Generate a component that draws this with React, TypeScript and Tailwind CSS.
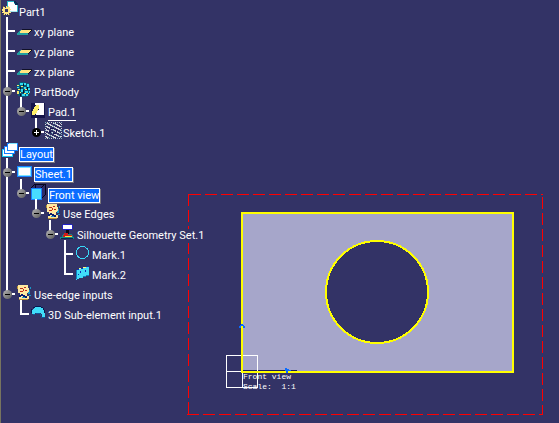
import { useState } from "react";
import type { ReactNode } from "react";

type TreeNode = {
  label: string;
  icon: ReactNode;
  children?: TreeNode[];
  collapsed?: boolean;
  selected?: boolean;
  underlined?: boolean;
  spaced?: boolean;
};

function Icon({ children }: { children: ReactNode }) {
  return (
    <svg
      viewBox="0 0 16 16"
      className="size-4 shrink-0 overflow-visible"
      shapeRendering="crispEdges"
      aria-hidden="true"
    >
      {children}
    </svg>
  );
}

const partIcon = (
  <Icon>
    <path d="M6-2h8v2h3v9H6z" fill="#2ab8c8" />
    <path d="M7-1h6v2h3v7H7z" fill="#fff" />
    <path d="M13-2h2v1h1v1h1v2h-3V0h-1z" fill="#0d2a55" />
    <path d="M9 8h7v1H9z" fill="#a8e4ec" />
    <path
      d="M5 3h1v1h1V3h1v1h1v2h1v1H9v2h1v1H8v2H7v-1H6v1H5v-1H4v1H3v-2H1V9h1V8H1V6h1V4h2v1h1z"
      fill="#ffe680"
    />
    <path d="M4 6h3v3H4z" fill="#333366" />
    <path d="M2 11h1v1H2zM8 11h1v1H8zM2 3h1v1H2z" fill="#8a7830" />
  </Icon>
);

const planeIcon = (
  <Icon>
    <path d="M6 6h10l-5 5H1z" fill="#ffe680" />
    <path d="M6 6h10v1H6zM15 7h1v1h-1zM14 8h1v1h-1zM13 9h1v1h-1zM12 10h1v1h-1z" fill="#111128" />
    <path d="M1 10h11v2H1zM2 9h2v1H2zM3 8h1v1H3zM4 7h1v1H4z" fill="#20a0a0" />
  </Icon>
);

const bodyIcon = (
  <Icon>
    <path d="M3-1h6v1h4v2h1v9h-1v2h-2v1H4v-1H2v-2H1V8h1V6H1V1h2z" fill="#0a5878" />
    <path
      d="M4 0h3v2H4zM8 0h2v2H8zM11 1h2v3h-2zM8 4h2v2H8zM12 5h2v2h-2zM5 6h2v3H5zM9 8h3v2H9zM13 8h1v2h-1zM6 11h3v2H6zM10 11h2v2h-2zM1 4h2v1H1z"
      fill="#30dcf0"
    />
    <path
      d="M1 2h2v1H1zM5 3h2v1H5zM2 6h2v1H2zM1 8h2v3H1zM4 9h1v1H4zM9 6h2v1H9zM8 10h2v1H8zM12 10h1v1h-1z"
      fill="#f4e86a"
    />
    <path d="M7 1h1v2H7zM7 7h1v3H7zM11 4h1v3h-1zM4 11h1v2H4zM4 4h1v2H4z" fill="#06102c" />
  </Icon>
);

const padIcon = (
  <Icon>
    <path d="M1 0h14v15H1z" fill="#15154a" />
    <path d="M5 0h9v12H6V9l3-3V2H5z" fill="#fff" />
    <path d="M6 2h3v4H8v2H7v2H6v1H5v1H2V8h1V6h1V4h1V3h1z" fill="#fff06a" />
  </Icon>
);

const sketchIcon = (
  <Icon>
    {Array.from({ length: 17 }, (_, y) =>
      Array.from({ length: 17 }, (_, x) => {
        const edge = x === 0 || y === 0 || x === 16 || y === 16;
        const on = edge ? (x + y) % 2 === 0 : (x * x * 3 + y * y * 5 + x * y * 2) % 7 < 4;
        return on ? (
          <rect
            key={`${x}-${y}`}
            x={x}
            y={y - 2}
            width="1"
            height="1"
            fill={(x + y * 3) % 4 === 0 ? "#7ca8b8" : "#d8d8dc"}
          />
        ) : null;
      }),
    )}
    <path d="M5 4h4v1H5zM4 7h2v2H4zM8 9h3v1H8zM11 5h1v3h-1z" fill="#181850" />
  </Icon>
);

const layoutIcon = (
  <Icon>
    <path d="M1 5h10v7H1z" fill="#fff" stroke="#18c8f0" />
    <path d="M3 2h10v7H3z" fill="#fff" stroke="#1480ff" />
    <path d="M6-1h10v7H6z" fill="#fff" stroke="#1480ff" />
    <path d="M8-1h8v1H8z" fill="#7ce4ff" />
  </Icon>
);

const sheetIcon = (
  <Icon>
    <path d="M1 2h15v11H1z" fill="#1480ff" />
    <path d="M2 3h13v9H2z" fill="#7ce4ff" />
    <path d="M3 4h11v7H3z" fill="#fff" />
  </Icon>
);

const viewIcon = (
  <Icon>
    <path d="M1 3l4-4h10v11l-4 4" fill="#2c2c6c" stroke="#05051c" />
    <path d="M11 3l4-4M5-1v4" fill="none" stroke="#05051c" />
    <path d="M1 3h11v12H1z" fill="#1480ff" />
    <path d="M2 4h9v10H2z" fill="#48dcff" />
  </Icon>
);

const edgesIcon = (
  <Icon>
    <path d="M2-1h10v3h1v5h-2v3h2v3H3v-3h1V7H2z" fill="#ffe9a0" />
    <path d="M3 13h9v1H3zM1 0h1v3H1z" fill="#b89030" />
    <path d="M4 2h3v1H4zM8 1h2v1H8zM7 3h1v2H7zM4 5h3v1H4zM9 4h2v1H9z" fill="#c02818" />
    <path d="M5 8h2v1h2v1h2v2H9v-1H7v-1H5zM3 9h2v2H3z" fill="#081c70" />
    <path d="M14 1h1v2h-1zM13 4h1v2h-1zM12 6h2v2h-2zM13 9h2v1h-2zM6 11h3v1H6z" fill="#1898c8" />
  </Icon>
);

const geometrySetIcon = (
  <Icon>
    <path d="M4-2h9v1h1v4h-1v1H4V3H3v-4h1z" fill="#2020c8" />
    <path d="M4-1h9v4H4z" fill="#fff" />
    <path d="M7 4h3v4H7z" fill="#080818" />
    <path d="M4 8h9v1h1v2h1v2H1v-2h2V9h1z" fill="#108888" />
    <path d="M5 7h4v2h4v2H4V9h1z" fill="#d01818" />
    <path d="M6 10h7v1H6z" fill="#ffe040" />
    <path d="M2 12h12v1H2z" fill="#082848" />
  </Icon>
);

const circleMarkIcon = (
  <Icon>
    <circle cx="8.5" cy="6.5" r="6" fill="none" stroke="#38d8f8" />
  </Icon>
);

const faceMarkIcon = (
  <Icon>
    <path d="M2 4l4-2h5l4-2v9l-4 2-5 1-4 2z" fill="#40dcf8" />
    <path d="M5 2h3v1H5zM9 1h3v1H9z" fill="#fff080" />
    <path d="M3 3h2v1H3zM7 2h2v1H7zM13 0h2v1h-2zM6 5h1v2H6zM11 4h1v2h-1zM4 8h1v1H4z" fill="#1030b0" />
    <path d="M2 4h1v9H2zM12 9h3v1h-3zM9 10h3v1H9z" fill="#0c80c0" />
  </Icon>
);

const subElementIcon = (
  <Icon>
    <path d="M2 7V4l3-3h6l3 3 1 3v4h-3V9l-2-2H6L4 8H2z" fill="#40dcf8" />
    <path d="M5 0h6v1H5zM3 1h2v1H3zM11 1h2v1h-2zM13 2h1v2h-1zM14 4h1v3h-1zM1 3h1v4H1z" fill="#081850" />
    <path d="M3 8h2v1H3zM6 7h4v1H6zM10 8h1v2h-1zM11 11h4v1h-4z" fill="#0c5898" />
  </Icon>
);

const tree: TreeNode[] = [
  {
    label: "Part1",
    icon: partIcon,
    children: [
      { label: "xy plane", icon: planeIcon },
      { label: "yz plane", icon: planeIcon },
      { label: "zx plane", icon: planeIcon },
      {
        label: "PartBody",
        icon: bodyIcon,
        children: [
          {
            label: "Pad.1",
            icon: padIcon,
            underlined: true,
            spaced: true,
            children: [{ label: "Sketch.1", icon: sketchIcon, collapsed: true }],
          },
        ],
      },
    ],
  },
  {
    label: "Layout",
    icon: layoutIcon,
    selected: true,
    children: [
      {
        label: "Sheet.1",
        icon: sheetIcon,
        selected: true,
        spaced: true,
        children: [
          {
            label: "Front view",
            icon: viewIcon,
            selected: true,
            children: [
              {
                label: "Use Edges",
                icon: edgesIcon,
                spaced: true,
                children: [
                  {
                    label: "Silhouette Geometry Set.1",
                    icon: geometrySetIcon,
                    children: [
                      { label: "Mark.1", icon: circleMarkIcon },
                      { label: "Mark.2", icon: faceMarkIcon },
                    ],
                  },
                ],
              },
            ],
          },
        ],
      },
      {
        label: "Use-edge inputs",
        icon: edgesIcon,
        children: [{ label: "3D Sub-element input.1", icon: subElementIcon }],
      },
    ],
  },
];

function Label({ node }: { node: TreeNode }) {
  if (node.selected) {
    return (
      <span className="mt-1 border border-white bg-[#0a6cff] leading-[13px] shadow-[1px_1px_0_#77747a]">
        {node.label}
      </span>
    );
  }
  if (node.underlined) {
    return <span className="mt-1 border-b border-white leading-[14px]">{node.label}</span>;
  }
  return <span className="mt-1 bg-[#333366] leading-[14px]">{node.label}</span>;
}

function Branch({
  node,
  depth,
  first,
  last,
}: {
  node: TreeNode;
  depth: number;
  first: boolean;
  last: boolean;
}) {
  const [open, setOpen] = useState(!node.collapsed);
  const expandable = depth > 0 && (node.children !== undefined || node.collapsed);
  const indent = depth === 0 ? "" : depth % 2 === 1 ? "pl-[14px]" : "pl-[15px]";

  return (
    <li className="relative">
      {depth > 0 && (
        <span
          className={`absolute left-1.5 w-0.5 bg-white ${first ? "-top-1" : "top-0"} ${
            last ? (first ? "h-[15px]" : "h-[11px]") : "bottom-0"
          }`}
        />
      )}
      <div className={`relative flex h-5 items-center gap-0.5 ${depth === 0 ? "pl-px" : ""}`}>
        {depth > 0 && (
          <span className="-mr-px flex w-[15px] items-center">
            {expandable ? (
              <>
                <button
                  type="button"
                  aria-label={`${open ? "Collapse" : "Expand"} ${node.label}`}
                  aria-expanded={open}
                  onClick={() => setOpen(!open)}
                  className={`relative ml-[3px] flex size-[9px] shrink-0 items-center justify-center rounded-full ${
                    open ? "bg-linear-to-br from-[#b4b4b4] to-[#5c5c5c]" : "bg-black"
                  }`}
                >
                  <span className={`h-px w-[5px] ${open ? "bg-black" : "bg-white"}`} />
                  {!open && <span className="absolute h-[5px] w-px bg-white" />}
                </button>
                <span className="h-0.5 flex-1 bg-white" />
              </>
            ) : (
              <span className="ml-1.5 h-0.5 flex-1 bg-white" />
            )}
          </span>
        )}
        {node.icon}
        <Label node={node} />
      </div>
      {open && node.children && (
        <ul className={`${indent} ${node.spaced ? "pt-px" : ""}`}>
          {node.children.map((child, i) => (
            <Branch
              key={child.label}
              node={child}
              depth={depth + 1}
              first={i === 0}
              last={i === node.children!.length - 1 && node.label !== "Part1"}
            />
          ))}
        </ul>
      )}
    </li>
  );
}

function Drawing() {
  return (
    <svg
      viewBox="0 0 559 423"
      className="h-screen w-full [grid-area:1/1]"
      shapeRendering="crispEdges"
      role="img"
      aria-label="Front view drawing"
    >
      <g stroke="#ff0000" strokeDasharray="12 4" fill="none">
        <path d="M189 194.5H543" />
        <path d="M187 414.5H543" />
        <path d="M188.5 194V415" />
        <path d="M542.5 197V415" />
      </g>
      <rect x="242" y="213" width="271" height="159" fill="#a6a6ca" />
      <path d="M242 370.5h55" stroke="#1c1c5c" />
      <path d="M226.5 355.5h31v32h-31zM226 371.5h16M242.5 372v16" fill="none" stroke="#fff" />
      <rect x="242" y="213" width="271" height="159" fill="none" stroke="#ffff00" strokeWidth="2" />
      <circle cx="377" cy="292" r="51" fill="#333366" stroke="#ffff00" strokeWidth="2" />
      <path
        d="M241 324h2v1h1v1h1v2h-2v-2h-2v2h-2v-2h1v-1h1zM285 368h2v1h2v1h2v1h-3v2h-2v-2h-1z"
        fill="#0a6cff"
      />
      <g fill="#fff" fontSize="8" className="font-['Liberation_Mono',monospace]">
        <text x="243" y="379">Front view</text>
        <text x="243" y="389" xmlSpace="preserve">{"Scale:  1:1"}</text>
      </g>
    </svg>
  );
}

export default function App() {
  return (
    <main className="grid min-h-screen border-l border-[#77745f] bg-[#333366] font-['Roboto','Tahoma',sans-serif] text-[11px] whitespace-nowrap text-white">
      <div className="-ml-px grid overflow-hidden">
        <Drawing />
        <nav aria-label="Specification tree" className="relative justify-self-start pt-px [grid-area:1/1]">
          <ul>
            {tree.map((node) => (
              <Branch key={node.label} node={node} depth={0} first={false} last={false} />
            ))}
          </ul>
        </nav>
      </div>
    </main>
  );
}
